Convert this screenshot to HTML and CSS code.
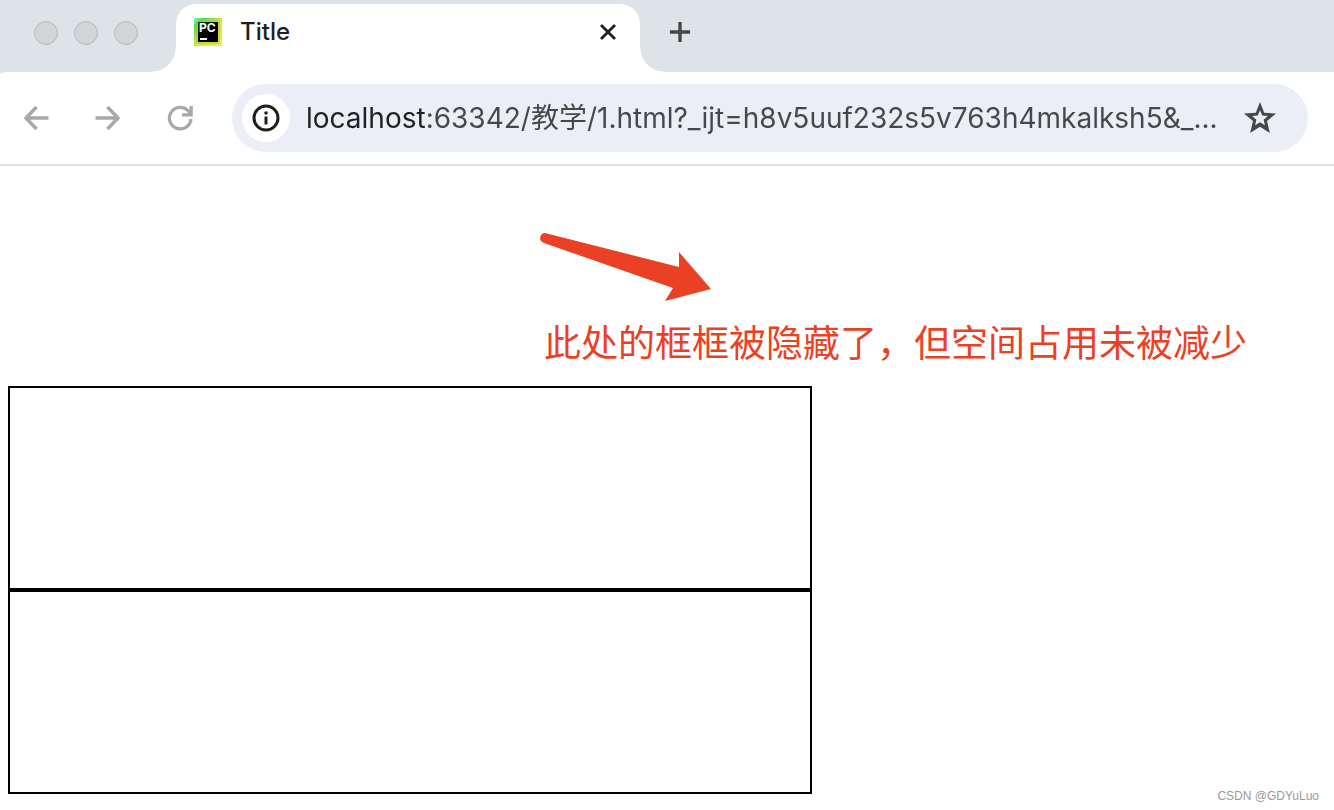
FILE: index.html
```html
<!DOCTYPE html>
<html lang="zh-CN">
<head>
<meta charset="utf-8">
<title>Title</title>
<link rel="stylesheet" href="styles.css">
</head>
<body>
<header class="browser">
  <div class="tab-strip">
    <div class="window-controls">
      <span class="light"></span><span class="light"></span><span class="light"></span>
    </div>
    <div class="tab">
      <svg class="favicon" viewBox="0 0 28 28" aria-hidden="true">
        <defs>
          <linearGradient id="frame" x1="0" y1="0" x2="1" y2="1">
            <stop offset="0" stop-color="#a8f5d0"/><stop offset=".16" stop-color="#3fe05a"/>
            <stop offset=".5" stop-color="#cfe83c"/><stop offset="1" stop-color="#f6ee4e"/>
          </linearGradient>
          <linearGradient id="core" x1="0" y1="0" x2="1" y2="1">
            <stop offset="0" stop-color="#17321c"/><stop offset=".5" stop-color="#000"/>
          </linearGradient>
        </defs>
        <path d="M0 0h28v28H0z" fill="url(#frame)"/>
        <path d="M3 3h22v22H3z" fill="none" stroke="#a9c934" stroke-width="1"/>
        <path d="M4 4h20v20H4z" fill="url(#core)"/>
        <path d="M6 20h7v2H6z" fill="#fff"/>
        <text class="favicon-text" x="5" y="14">PC</text>
      </svg>
      <span class="tab-title">Title</span>
      <button class="icon-button close" type="button" aria-label="Close tab">
        <svg viewBox="0 0 24 24" width="24" height="24"><path d="M5 5l14 14M19 5L5 19" fill="none" stroke="#1f1f1f" stroke-width="2.800"/></svg>
      </button>
    </div>
    <button class="icon-button new-tab" type="button" aria-label="New tab">
      <svg viewBox="0 0 24 24" width="24" height="24"><path d="M12 2v20M2 12h20" fill="none" stroke="#474747" stroke-width="3.400"/></svg>
    </button>
  </div>
  <div class="toolbar">
    <nav class="nav">
      <button class="icon-button" type="button" aria-label="Back">
        <svg viewBox="0 0 28 28" width="28" height="28"><path d="M26.500 14H4.500M14.500 3L4 14l10.500 11" fill="none" stroke="#a8a8a8" stroke-width="3.400"/></svg>
      </button>
      <button class="icon-button" type="button" aria-label="Forward">
        <svg viewBox="0 0 28 28" width="28" height="28"><path d="M1.500 14h22M13.500 3L24 14 13.500 25" fill="none" stroke="#a8a8a8" stroke-width="3.400"/></svg>
      </button>
      <button class="icon-button" type="button" aria-label="Reload">
        <svg viewBox="0 0 28 28" width="28" height="28"><path d="M25 15A10.800 10.800 0 1 1 21.700 6.300L25 10M25.200 2v8.800H16" fill="none" stroke="#a8a8a8" stroke-width="3.200"/></svg>
      </button>
    </nav>
    <form class="omnibox">
      <button class="icon-button info" type="button" aria-label="View site information">
        <svg viewBox="0 0 28 28" width="28" height="28"><circle cx="14" cy="14" r="12" fill="none" stroke="#1f1f1f" stroke-width="3"/><path d="M12.500 12.500h3v8h-3z" fill="#1f1f1f"/><circle cx="14" cy="9" r="1.800" fill="#1f1f1f"/></svg>
      </button>
      <input class="url" type="text" aria-label="Address" value="localhost:63342/教学/1.html?_ijt=h8v5uuf232s5v763h4mkalksh5&amp;_...">
      <button class="icon-button star" type="button" aria-label="Bookmark this page">
        <svg viewBox="0 0 32 32" width="32" height="32"><path fill="#474747" fill-rule="evenodd" d="M16 0l4.200 10.700 11.800.9-9 7.500 2.900 11.900L16 24.700 6.100 31 9 19.100 0 11.600l11.800-.9zM16 8.200l-2.200 5.300-5.700.5 4.300 3.700-1.300 5.600 4.900-3 4.900 3-1.300-5.600 4.300-3.700-5.700-.5z"/></svg>
      </button>
    </form>
  </div>
</header>
<main class="page">
  <div class="box box-hidden"></div>
  <div class="box"></div>
  <div class="box"></div>
  <div class="note">
    <svg class="arrow" viewBox="0 0 172 68" width="172" height="68" aria-hidden="true"><path fill="#ea4125" d="M5 0L139 34V19L171 56 125 68 133 55 4 10Q0 8 0 5 1 0 5 0z"/></svg>
    <p class="note-text">此处的框框被隐藏了，但空间占用未被减少</p>
  </div>
</main>
<footer class="watermark">CSDN @GDYuLuo</footer>
</body>
</html>
```
FILE: styles.css
```css
* { box-sizing: border-box; }

body {
  margin: 0;
  min-height: 100vh;
  position: relative;
  background: #fff;
  font-family: Inter, "Noto Sans CJK SC", sans-serif;
}

.icon-button {
  display: flex;
  align-items: center;
  justify-content: center;
  flex: none;
  padding: 0;
  border: 0;
  background: none;
}

.browser {
  border-bottom: 2px solid #e1e1e1;
  background: #dee3e7;
}

.tab-strip {
  display: flex;
  align-items: center;
  height: 72px;
  padding-top: 4px;
}

.window-controls {
  display: flex;
  gap: 16px;
  width: 176px;
  padding: 0 34px;
  margin-top: -10px;
}

.light {
  width: 24px;
  height: 24px;
  border: 1px solid #b9babb;
  border-radius: 50%;
  background: #d2d4d6;
}

.tab {
  position: relative;
  display: flex;
  align-items: center;
  width: 464px;
  height: 68px;
  padding: 0 20px 12px 18px;
  border-radius: 20px 20px 0 0;
  background: #fff;
}

.tab::before,
.tab::after {
  content: "";
  position: absolute;
  bottom: 0;
  width: 24px;
  height: 24px;
}

.tab::before {
  right: 100%;
  background: radial-gradient(circle at 0 0, transparent 23px, #fff 24px);
}

.tab::after {
  left: 100%;
  background: radial-gradient(circle at 100% 0, transparent 23px, #fff 24px);
}

.favicon { width: 28px; height: 28px; }

.favicon-text {
  fill: #fff;
  font: 700 12px Inter, sans-serif;
}

.tab-title {
  flex: 1;
  margin-left: 18px;
  color: #1f1f1f;
  font-size: 24px;
  font-weight: 500;
  line-height: 32px;
}

.new-tab { margin: -12px 0 0 28px; }

.toolbar {
  display: flex;
  align-items: center;
  gap: 38px;
  height: 92px;
  padding: 0 26px 0 22px;
  border-top-left-radius: 8px 2px;
  background: #fff;
}

.nav {
  display: flex;
  gap: 44px;
}

.omnibox {
  display: flex;
  align-items: center;
  flex: 1;
  min-width: 0;
  height: 68px;
  padding: 0 32px 0 10px;
  border-radius: 34px;
  background: #ebeef7;
}

.info {
  width: 48px;
  height: 48px;
  border-radius: 50%;
  background: #fff;
}

.url {
  flex: 1;
  min-width: 0;
  height: 48px;
  margin: 0 12px 0 16px;
  padding: 0 0 4px;
  border: 0;
  outline: 0;
  background: linear-gradient(90deg, #1f1f1f 120px, #474747 120px);
  background-clip: text;
  color: transparent;
  font: 400 28px Inter, "Noto Sans CJK SC", sans-serif;
}

.page {
  position: relative;
  padding: 16px 8px;
}

.box {
  width: 804px;
  max-width: 100%;
  height: 204px;
  border: 2px solid #000;
}

.box-hidden { visibility: hidden; }

.note {
  position: absolute;
  top: 67px;
  left: 540px;
  color: #ea4125;
}

.arrow { display: block; }

.note-text {
  margin: 12px 0 0 4px;
  font: 400 37px/56px "Noto Sans CJK SC", sans-serif;
  white-space: nowrap;
}

.watermark {
  position: absolute;
  right: 15px;
  bottom: 6px;
  color: #999;
  font: 12px/16px "Liberation Sans", sans-serif;
}
```
